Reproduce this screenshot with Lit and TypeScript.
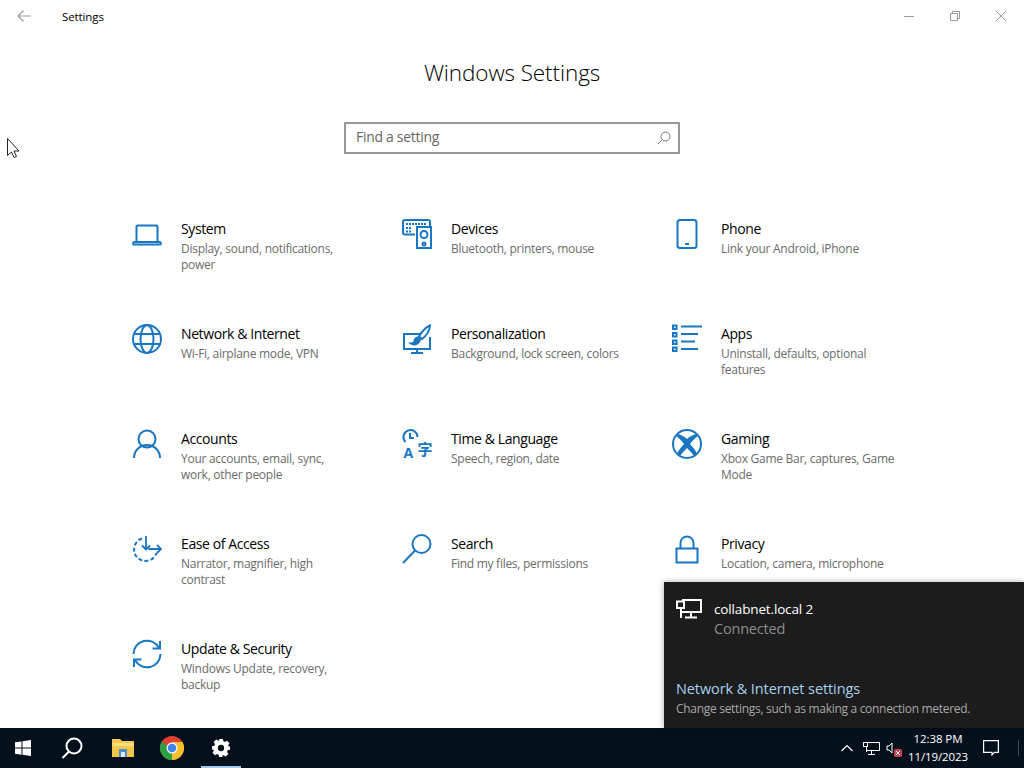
import { LitElement, html, svg, css } from "lit";
import { customElement } from "lit/decorators.js";

const icon = (body: unknown) => html`
	<svg class="icon" viewBox="0 0 30 30" width="30" height="30" fill="none" stroke="currentColor" stroke-width="2">${body}</svg>
`;

const tiles = [
	{
		title: "System",
		desc: "Display, sound, notifications, power",
		icon: icon(svg`
			<path d="M4.5 22V7.5a1 1 0 0 1 1-1h19a1 1 0 0 1 1 1V22" />
			<path d="M1.5 25.5a1.5 1.5 0 0 1 1.5-2.5h24a1.5 1.5 0 0 1 1.5 2.5z" />
		`),
	},
	{
		title: "Devices",
		desc: "Bluetooth, printers, mouse",
		icon: icon(svg`
			<path d="M13 15.5H3a2 2 0 0 1-2-2V3a2 2 0 0 1 2-2h23a2 2 0 0 1 2 2v4" />
			<path d="M4 5h20M4 9h6M4 12.5h6" stroke-dasharray="2 1" />
			<rect x="15" y="8" width="14" height="21" />
			<circle cx="22" cy="15.5" r="3.5" />
			<circle cx="22" cy="25" r="1.5" />
		`),
	},
	{
		title: "Phone",
		desc: "Link your Android, iPhone",
		icon: icon(svg`
			<rect x="5.5" y="1" width="19" height="28" rx="2.5" />
			<path d="M13 25h4" />
		`),
	},
	{
		title: "Network & Internet",
		desc: "Wi-Fi, airplane mode, VPN",
		icon: icon(svg`
			<circle cx="15" cy="15" r="14" />
			<ellipse cx="15" cy="15" rx="6.5" ry="14" />
			<path d="M2.5 10h25M2.5 20h25" />
		`),
	},
	{
		title: "Personalization",
		desc: "Background, lock screen, colors",
		icon: icon(svg`
			<path d="M18 10H2v15h26V13" />
			<path d="M15 25v4M9 29h12" />
			<path d="M28 1.5c-3 1-8 6-11 11l3 2.5c4-3 7.5-8 8-13.5z" />
			<path d="M16.5 13.5c-2.500 0-4 2-4 4.500-1 1-2 1.500-3.500 1.500 2 1.500 7 1.500 9-3.500z" fill="currentColor" />
		`),
	},
	{
		title: "Apps",
		desc: "Uninstall, defaults, optional features",
		icon: icon(svg`
			<path d="M9 2.5h21M9 10h17M9 17.5h14M9 25h17" />
			<path fill="currentColor" stroke="none" fill-rule="evenodd" d="M0 .5h5.5V6H0zM2 2.5V4h1.5V2.5zM0 8h5.5v5.500H0zM2 10v1.500h1.500V10zM0 15.500h5.500V21H0zM2 17.500V19h1.500v-1.500zM0 22.500h5.500V28H0zM2 24.500V26h1.500v-1.500z" />
		`),
	},
	{
		title: "Accounts",
		desc: "Your accounts, email, sync, work, other people",
		icon: icon(svg`
			<circle cx="15" cy="10" r="8.5" />
			<path d="M2 29a13 13 0 0 1 26 0" />
		`),
	},
	{
		title: "Time & Language",
		desc: "Speech, region, date",
		icon: icon(svg`
			<path d="M3.5 13A7 7 0 1 1 15.500 8" />
			<path d="M8 4v5h4" />
			<text class="glyph" x="1.500" y="29" font-size="14" font-weight="700">A</text>
			<text class="glyph cjk" x="15.500" y="26" font-size="15" font-weight="700">字</text>
		`),
	},
	{
		title: "Gaming",
		desc: "Xbox Game Bar, captures, Game Mode",
		icon: icon(svg`
			<circle cx="15" cy="15" r="14" />
			<path fill="currentColor" stroke="none" d="M6 5C10 6 13 8 15 10C17 8 20 6 24 5L26 7C23 9 20 12 18 15C21 18 24 22 25 25L22 27C20 24 17 21 15 19C13 21 10 24 8 27L5 25C6 22 9 18 12 15C10 12 7 9 4 7z" />
		`),
	},
	{
		title: "Ease of Access",
		desc: "Narrator, magnifier, high contrast",
		icon: icon(svg`
			<path d="M10 4.5A11.5 11.5 0 1 0 24.500 19" stroke-dasharray="4 2.200" />
			<path d="M14 2v13M10 11.5l4 4 4-4M16.5 15h12M25 11l4 4-4 4" stroke-width="1.800" />
		`),
	},
	{
		title: "Search",
		desc: "Find my files, permissions",
		icon: icon(svg`
			<circle cx="19.5" cy="10" r="9" />
			<path d="M13 16.5L1 29" />
		`),
	},
	{
		title: "Privacy",
		desc: "Location, camera, microphone",
		icon: icon(svg`
			<rect x="4.5" y="14.5" width="21" height="14" />
			<path d="M8.5 14V9a6.5 6.5 0 0 1 13 0v5" />
		`),
	},
	{
		title: "Update & Security",
		desc: "Windows Update, recovery, backup",
		icon: icon(svg`
			<path d="M1.5 15A13.5 13.5 0 0 1 27 9" />
			<path d="M28 2v7.5h-7.5" />
			<path d="M28.5 15A13.5 13.5 0 0 1 3 21" />
			<path d="M2 28v-7.5h7.5" />
		`),
	},
];

@customElement("app-root")
export class AppRoot extends LitElement {
	static override styles = css`
		:host {
			background: #fff;
			display: flex;
			flex-direction: column;
			font-family: "Open Sans", "Noto Sans", sans-serif;
			height: 768px;
			overflow: hidden;
			position: relative;
		}

		.window {
			flex: 1;
			min-height: 0;
		}

		.titlebar {
			align-items: center;
			display: flex;
			height: 32px;
		}

		.back {
			color: #999;
			margin-left: 17px;
		}

		.app-name {
			color: #000;
			font-size: 11.5px;
			letter-spacing: -0.1px;
			margin-left: 31px;
		}

		.controls {
			color: #999;
			display: flex;
			gap: 34px;
			margin-left: auto;
			margin-right: 17px;
		}

		h1 {
			color: #000;
			font-size: 22.5px;
			font-weight: 300;
			letter-spacing: -0.1px;
			line-height: 30px;
			margin: 26px 0 0;
			text-align: center;
		}

		.search {
			align-items: center;
			border: 2px solid #999;
			box-sizing: border-box;
			color: #666;
			display: flex;
			font-size: 14px;
			height: 32px;
			justify-content: space-between;
			letter-spacing: -0.3px;
			margin: 34px auto 0;
			padding: 0 7px 0 10px;
			width: 336px;
		}

		.search span {
			padding-bottom: 4px;
		}

		.search svg {
			color: #777;
		}

		.grid {
			display: grid;
			grid-auto-rows: 105px;
			grid-template-columns: repeat(3, 270px);
			margin: 65px 0 0 132px;
		}

		.tile {
			display: flex;
			gap: 19px;
		}

		.icon {
			color: #1976c2;
			flex: none;
			overflow: visible;
		}

		.glyph {
			fill: currentColor;
			font-family: "Open Sans", sans-serif;
			stroke: none;
		}

		.cjk {
			font-family: "Noto Sans CJK SC", sans-serif;
		}

		.tile-title {
			color: #000;
			font-size: 14px;
			letter-spacing: -0.4px;
			line-height: 20px;
		}

		.tile-desc {
			color: #6b6b6b;
			font-size: 12px;
			letter-spacing: -0.27px;
			line-height: 16px;
			margin-top: 2px;
			width: 174.5px;
		}

		.taskbar {
			align-items: center;
			background: #04111c;
			color: #fff;
			display: flex;
			flex: none;
			height: 40px;
		}

		.pin {
			align-items: center;
			display: flex;
			height: 40px;
			justify-content: center;
			position: relative;
			width: 49px;
		}

		.pin.nudged svg {
			margin-right: 3px;
		}

		.pin.active::after {
			background: #a3cbee;
			bottom: 0;
			content: "";
			height: 2px;
			left: 5px;
			position: absolute;
			right: 4px;
		}

		.tray {
			align-items: center;
			display: flex;
			margin-left: auto;
		}

		.caret {
			margin-right: 10px;
		}

		.volume {
			display: flex;
			margin-left: 6px;
			position: relative;
		}

		.muted {
			bottom: -2px;
			position: absolute;
			right: -2px;
		}

		.clock {
			font-size: 11.5px;
			letter-spacing: -0.1px;
			line-height: 18px;
			text-align: center;
			width: 76px;
		}

		.notify {
			border-right: 1px solid #3a4650;
			display: flex;
			margin-left: 7px;
			margin-right: 5px;
			padding-right: 19px;
		}

		.flyout {
			background: #1c1c1c;
			bottom: 40px;
			box-shadow: 0 0 6px rgba(0, 0, 0, 0.35);
			box-sizing: border-box;
			display: flex;
			flex-direction: column;
			height: 146px;
			justify-content: space-between;
			padding: 17px 12px 9px;
			position: absolute;
			right: 0;
			width: 360px;
		}

		.connection {
			color: #fff;
			display: flex;
			gap: 12px;
		}

		.name {
			font-size: 13.5px;
			letter-spacing: -0.15px;
			line-height: 20px;
		}

		.state {
			color: #8c8c8c;
			font-size: 14.5px;
			letter-spacing: -0.2px;
			line-height: 20px;
		}

		.settings-link {
			color: #a6d0ee;
			font-size: 14.5px;
			letter-spacing: -0.1px;
			line-height: 20px;
		}

		.settings-note {
			color: #a8a8a8;
			font-size: 12px;
			letter-spacing: -0.3px;
			line-height: 20px;
		}

		.cursor {
			left: 7px;
			position: absolute;
			top: 138px;
		}
	`;

	override render() {
		return html`
			<div class="window">
				<div class="titlebar">
					<svg class="back" width="14" height="14" viewBox="0 0 14 14" fill="none" stroke="currentColor" stroke-width="1.2">
						<path d="M13.5 7H1M6.5 1.5L1 7l5.5 5.5" />
					</svg>
					<span class="app-name">Settings</span>
					<div class="controls">
						<svg width="12" height="12" viewBox="0 0 12 12" fill="none" stroke="currentColor"><path d="M1 6.5h10" /></svg>
						<svg width="12" height="12" viewBox="0 0 12 12" fill="none" stroke="currentColor"><path d="M1.5 3.5h7v7h-7zM3.5 3.5v-2h7v7h-2" /></svg>
						<svg width="12" height="12" viewBox="0 0 12 12" fill="none" stroke="currentColor"><path d="M1 1l10 10M11 1L1 11" /></svg>
					</div>
				</div>
				<h1>Windows Settings</h1>
				<div class="search">
					<span>Find a setting</span>
					<svg width="14" height="14" viewBox="0 0 14 14" fill="none" stroke="currentColor">
						<circle cx="8.5" cy="5.5" r="4.5" />
						<path d="M5.3 8.7L1 13" />
					</svg>
				</div>
				<div class="grid">
					${tiles.map(
						(tile) => html`
							<div class="tile">
								${tile.icon}
								<div>
									<div class="tile-title">${tile.title}</div>
									<div class="tile-desc">${tile.desc}</div>
								</div>
							</div>
						`
					)}
				</div>
			</div>

			<div class="taskbar">
				<div class="pin nudged">
					<svg width="16" height="16" viewBox="0 0 16 16" fill="#fff">
						<path d="M0 2.3l6.5-.9v6.200H0zM7.5 1.300L16 0v7.600H7.500zM0 8.500h6.500v6.200L0 13.700zM7.500 8.500H16V16l-8.500-1.200z" />
					</svg>
				</div>
				<div class="pin nudged">
					<svg width="22" height="22" viewBox="0 0 22 22" fill="none" stroke="#fff" stroke-width="2">
						<circle cx="13" cy="9" r="7.5" />
						<path d="M8 14.5L1.5 21" />
					</svg>
				</div>
				<div class="pin">
					<svg width="22" height="20" viewBox="0 0 22 20">
						<path d="M0 1h8l2 2h12v16H0z" fill="#f2c54b" />
						<path d="M0 5h22v3H0z" fill="#f9dc7c" />
						<path d="M7 11h8v8h-2v-5H9v5H7z" fill="#4c8fcb" />
						<path d="M9 14h4v5H9z" fill="#dfe7ee" />
					</svg>
				</div>
				<div class="pin">
					<svg width="24" height="24" viewBox="0 0 24 24">
						<circle cx="12" cy="12" r="12" fill="#e0402f" />
						<path d="M12 12L1.6 6A12 12 0 0 0 12 24z" fill="#2f9e44" />
						<path d="M12 12V24A12 12 0 0 0 22.4 6H12z" fill="#f6c02c" />
						<circle cx="12" cy="12" r="5.5" fill="#fff" />
						<circle cx="12" cy="12" r="4.3" fill="#3f83ea" />
					</svg>
				</div>
				<div class="pin active">
					<svg width="18" height="18" viewBox="0 0 20 20">
						<path fill="#fff" fill-rule="evenodd" d="M8 0h4l.6 2.600 1.700.7 2.300-1.400 2.800 2.800-1.400 2.300.7 1.700L20 8v4l-2.600.6-.7 1.700 1.400 2.300-2.800 2.800-2.300-1.400-1.700.7L12 20H8l-.6-2.600-1.700-.7-2.300 1.400-2.800-2.800 1.400-2.300-.7-1.700L0 12V8l2.600-.6.7-1.700L1.900 3.400l2.800-2.800L7 2l1-.4zM10 6.500a3.500 3.500 0 1 0 0 7 3.500 3.500 0 0 0 0-7z" />
					</svg>
				</div>
				<div class="tray">
					<svg class="caret" width="12" height="8" viewBox="0 0 12 8" fill="none" stroke="#fff" stroke-width="1.2"><path d="M.5 7L6 1.5 11.5 7" /></svg>
					<svg width="17" height="15" viewBox="0 0 17 15" fill="none" stroke="#fff"><path d="M4.5 1.500h12v8h-13V6M8.500 9.500v4M5 13.500h7M3.500 6v5" /><rect x=".5" y="1.500" width="4" height="4" /></svg>
					<div class="volume">
						<svg width="14" height="14" viewBox="0 0 14 14" fill="none" stroke="#fff"><path d="M1 5h2l3-3v10L3 9H1z" /></svg>
						<svg class="muted" width="8" height="8" viewBox="0 0 8 8">
							<rect width="8" height="8" rx="1.5" fill="#c8434f" />
							<path d="M2 2l4 4M6 2L2 6" stroke="#fff" />
						</svg>
					</div>
					<div class="clock">12:38 PM<br />11/19/2023</div>
					<div class="notify">
						<svg width="16" height="16" viewBox="0 0 16 16" fill="none" stroke="#fff" stroke-width="1.2"><path d="M.6.6h14.800v11.800H11.500l-2.500 2.500V12.400H.6z" /></svg>
					</div>
				</div>
			</div>

			<div class="flyout">
				<div class="connection">
					<svg width="26" height="20" viewBox="0 0 26 20" fill="none" stroke="#fff" stroke-width="2">
						<path d="M6 1h19v12H6M15 13v5M9 18.5h12M5 9v10" />
						<rect x="1" y="2.5" width="7" height="6.5" />
					</svg>
					<div>
						<div class="name">collabnet.local 2</div>
						<div class="state">Connected</div>
					</div>
				</div>
				<div>
					<div class="settings-link">Network & Internet settings</div>
					<div class="settings-note">Change settings, such as making a connection metered.</div>
				</div>
			</div>

			<svg class="cursor" width="13" height="20" viewBox="0 0 13 20">
				<path d="M.5.5v17l4-3.5 2.500 5.500 2.500-1-2.500-5.500h5z" fill="#fff" stroke="#222" />
			</svg>
		`;
	}
}
